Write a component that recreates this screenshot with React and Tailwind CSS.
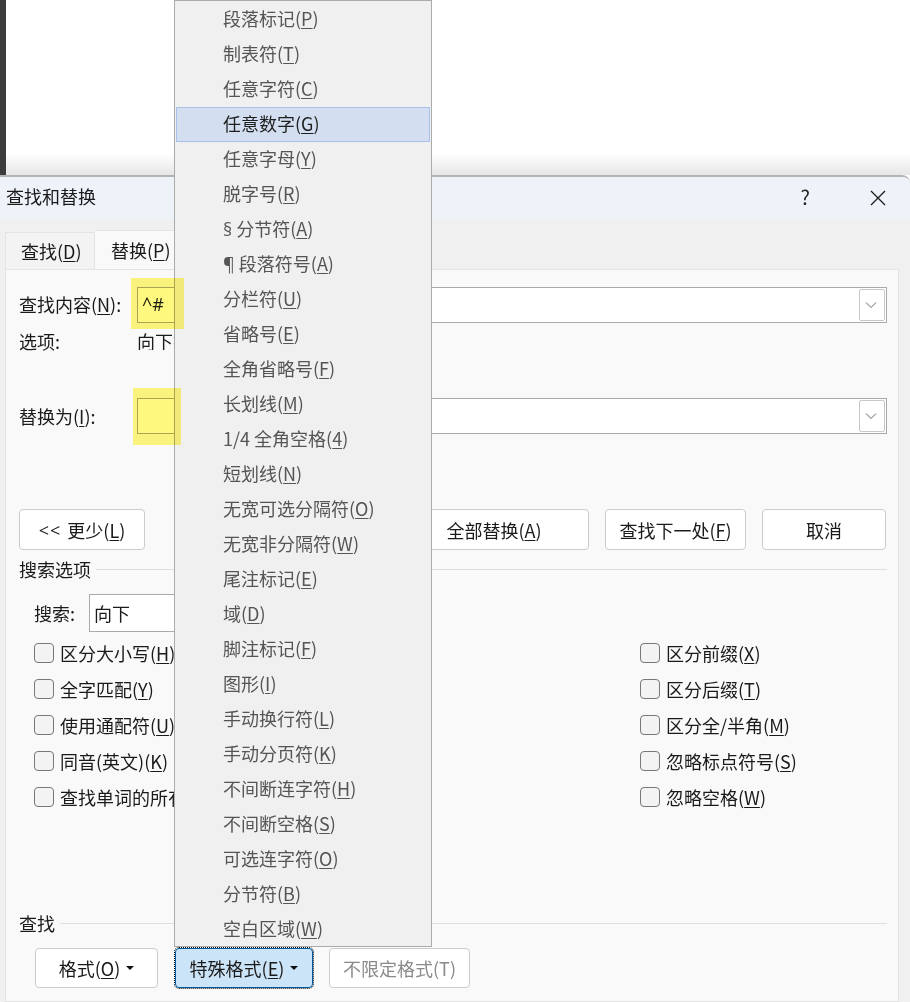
import React from 'react'

const menuItems = [
  ['段落标记', 'P'], ['制表符', 'T'], ['任意字符', 'C'], ['任意数字', 'G'], ['任意字母', 'Y'],
  ['脱字号', 'R'], ['分节符', 'A', '§'], ['段落符号', 'A', '¶'], ['分栏符', 'U'], ['省略号', 'E'],
  ['全角省略号', 'F'], ['长划线', 'M'], ['1/4 全角空格', '4'], ['短划线', 'N'], ['无宽可选分隔符', 'O'],
  ['无宽非分隔符', 'W'], ['尾注标记', 'E'], ['域', 'D'], ['脚注标记', 'F'], ['图形', 'I'],
  ['手动换行符', 'L'], ['手动分页符', 'K'], ['不间断连字符', 'H'], ['不间断空格', 'S'], ['可选连字符', 'O'],
  ['分节符', 'B'], ['空白区域', 'W'],
]

const leftChecks = [['区分大小写', 'H'], ['全字匹配', 'Y'], ['使用通配符', 'U'], ['同音(英文)', 'K'], ['查找单词的所有形式(英文)', 'W']]
const rightChecks = [['区分前缀', 'X'], ['区分后缀', 'T'], ['区分全/半角', 'M'], ['忽略标点符号', 'S'], ['忽略空格', 'W']]

// text with its underlined access key, e.g. 查找(D)
function Key({ text, k, after = '' }) {
  return <>{text}(<u className="underline-offset-2">{k}</u>){after}</>
}

function Chevron() {
  return (
    <svg width="12" height="8" viewBox="0 0 12 8" fill="none" stroke="#666" strokeWidth="1">
      <path d="M1 1.5 L6 6.5 L11 1.5" />
    </svg>
  )
}

function Caret() {
  return (
    <svg width="8" height="4" viewBox="0 0 8 4" className="ml-[6px]" fill="#111">
      <path d="M0 0 H8 L4 4 Z" />
    </svg>
  )
}

function Combo({ text }) {
  return (
    <div className="ml-[5px] w-[750px] h-full bg-white border border-[#aaaaaa] flex items-center justify-between pl-[4px] pr-[1px]">
      <span className="font-['Open_Sans'] pb-[3px]">{text}</span>
      <div className="w-[26px] h-[32px] border border-[#c8c8c8] rounded-[2px] flex items-center justify-center pr-[2px]"><Chevron /></div>
    </div>
  )
}

function Btn({ className = '', children }) {
  return (
    <div className={`h-full bg-white border border-[#cccccc] rounded-[4px] flex items-center justify-center ${className}`}>
      {children}
    </div>
  )
}

function Check({ text, k, labelClass = '' }) {
  return (
    <div className="h-[36px] flex items-center">
      <div className="w-[20px] h-[20px] bg-[#f3f3f3] border border-[#787878] rounded-[4px] shrink-0" />
      <span className={`ml-[6px] whitespace-nowrap ${labelClass}`}><Key text={text} k={k} /></span>
    </div>
  )
}

function Section({ title, className = '' }) {
  return (
    <div className={`h-[24px] flex items-center ${className}`}>
      <span>{title}</span>
      <div className="flex-1 h-px bg-[#dedede] ml-[5px]" />
    </div>
  )
}

export default function App() {
  return (
    <div
      className="relative w-[910px] h-[1002px] overflow-hidden bg-white flex flex-col text-[18px] leading-none text-[#1a1a1a]"
      style={{ fontFamily: '"Noto Sans CJK SC", "Noto Sans", sans-serif' }}
    >
      {/* document behind the dialog */}
      <div className="h-[175px] shrink-0 flex bg-gradient-to-b from-white from-[88%] to-[#e6e6e6]">
        <div className="w-[6px] bg-[#3c3c3c]" />
      </div>

      <div className="flex-1 flex flex-col min-h-0 bg-[#f0f0f0] border-t-2 border-[#b4b4b4] rounded-tr-[8px] overflow-hidden">
        {/* title bar */}
        <div className="h-[42px] shrink-0 bg-[#eef3fa] flex items-center pl-[6px]">
          <span className="pb-[4px]">查找和替换</span>
          <span className="ml-auto text-[20px] text-[#222] pb-[2px]">?</span>
          <svg width="16" height="16" viewBox="0 0 16 16" className="ml-[60px] mr-[24px]" stroke="#1a1a1a" strokeWidth="1.3">
            <path d="M1 1 L15 15 M15 1 L1 15" />
          </svg>
        </div>

        {/* tabs */}
        <div className="h-[50px] shrink-0 flex items-end pl-[5px]">
          <div className="w-[90px] h-[37px] bg-[#f3f3f3] border border-b-0 border-[#e4e4e4] flex items-center pl-[15px] pb-[1px]">
            <Key text="查找" k="D" />
          </div>
          <div className="w-[100px] h-[39px] bg-[#f9f9f9] border-t border-[#e4e4e4] flex items-center pl-[16px] pb-[1px]">
            <Key text="替换" k="P" />
          </div>
        </div>

        {/* tab page */}
        <div className="flex-1 ml-[5px] mr-[11px] bg-[#f9f9f9] border border-[#e4e4e4] pl-[13px] pr-[11px]">
          <div className="mt-[17px] h-[36px] flex items-center">
            <span className="w-[113px] whitespace-nowrap pb-[2px]"><Key text="查找内容" k="N" after=":" /></span>
            <Combo text="^#" />
          </div>
          <div className="mt-[8px] h-[20px] flex items-center">
            <span className="w-[118px]">选项:</span>
            <span className="w-[37px] overflow-hidden whitespace-nowrap">向下搜索</span>
          </div>
          <div className="mt-[47px] h-[36px] flex items-center">
            <span className="w-[113px] whitespace-nowrap"><Key text="替换为" k="I" after=":" /></span>
            <Combo text="" />
          </div>

          <div className="mt-[75px] h-[41px] flex items-center">
            <Btn className="w-[126px]"><span className="font-['Open_Sans'] mr-[6px] tracking-[1px]">{'<<'}</span><Key text="更少" k="L" /></Btn>
            <Btn className="w-[190px] ml-[254px]"><Key text="全部替换" k="A" /></Btn>
            <Btn className="w-[141px] ml-[16px]"><Key text="查找下一处" k="F" /></Btn>
            <Btn className="w-[124px] ml-[16px]">取消</Btn>
          </div>

          <Section title="搜索选项" className="mt-[7px]" />

          <div className="mt-[13px] h-[38px] flex items-center pl-[15px]">
            <span className="w-[55px]">搜索:</span>
            <div className="w-[150px] h-full bg-white border border-[#aaaaaa] flex items-center pl-[4px]">向下</div>
          </div>

          <div className="mt-[3px] flex pl-[15px]">
            <div className="w-[606px]">
              {leftChecks.map(([text, k]) => <Check key={text} text={text} k={k} labelClass="max-w-[114px] overflow-hidden leading-[28px]" />)}
            </div>
            <div>
              {rightChecks.map(([text, k]) => <Check key={text} text={text} k={k} />)}
            </div>
          </div>

          <Section title="查找" className="mt-[96px]" />

          <div className="mt-[13px] h-[40px] flex items-center pl-[16px]">
            <Btn className="w-[123px]"><Key text="格式" k="O" /><Caret /></Btn>
            <div className="ml-[17px] w-[138px] h-full bg-[#cce4f7] border border-[#005a9e] rounded-[4px] outline-1 outline-dotted outline-[#111] flex items-center justify-center">
              <Key text="特殊格式" k="E" /><Caret />
            </div>
            <Btn className="ml-[16px] w-[141px] text-[#8a8a8a]">不限定格式(T)</Btn>
          </div>
        </div>
      </div>

      {/* open special format menu */}
      <div className="absolute left-[174px] top-0 w-[258px] h-[947px] bg-[#f0f0f0] border border-[#ababab] py-px text-[#555555]">
        {menuItems.map(([text, k, sym]) => (
          <div
            key={text + k}
            className={`h-[35px] flex items-center pb-[3px] ${k === 'G' ? 'mx-px pl-[46px] bg-[#d3dff1] border border-[#a9c1e6] text-[#1f1f1f]' : 'pl-[48px]'}`}
          >
            <span>
              {sym && <span className="font-['Open_Sans'] mr-[4px]">{sym}</span>}
              <Key text={text} k={k} />
            </span>
          </div>
        ))}
      </div>

      {/* yellow marker annotations */}
      <div className="absolute left-[131px] top-[278px] w-[53px] h-[51px] bg-[#fff200]/50 mix-blend-multiply" />
      <div className="absolute left-[133px] top-[388px] w-[48px] h-[57px] bg-[#fff200]/50 mix-blend-multiply" />
    </div>
  )
}
